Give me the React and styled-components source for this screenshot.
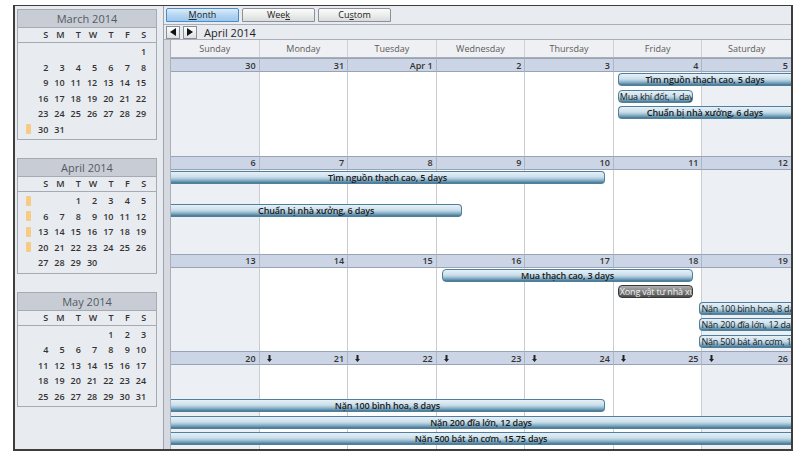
import React from 'react';
import styled, { createGlobalStyle } from 'styled-components';

const GlobalStyle = createGlobalStyle`
  body {
    margin: 0;
    background: #fff;
    font-family: "Open Sans", "Noto Sans", sans-serif;
  }
`;

const Frame = styled.div`
  margin: 5px 0 0 13px;
  width: 780px;
  height: 446px;
  box-sizing: border-box;
  border: 2px solid #3d3d3d;
  border-top-width: 1px;
  display: flex;
  background: #e8ebf0;
`;

const Sidebar = styled.div`
  width: 149px;
  box-sizing: border-box;
  padding: 3px 0 0 2px;
  display: flex;
  flex-direction: column;
  gap: 18px;
  border-right: 1px solid #9ea4ad;
`;

const MonthBox = styled.div`
  width: 140px;
  box-sizing: border-box;
  border: 1px solid #a6abb3;
`;

const MonthTitle = styled.div`
  height: 17px;
  line-height: 17px;
  background: #c8cdd5;
  border-bottom: 1px solid #a6abb3;
  text-align: center;
  font-size: 11px;
  color: #545a64;
`;

const MiniGrid = styled.div`
  display: grid;
  grid-template-columns: 16px repeat(7, 16.3px);
  grid-auto-rows: ${(p) => (p.$head ? '14px' : '15.5px')};
  padding: ${(p) => (p.$head ? '0' : '1px 0 2px')};
  border-bottom: ${(p) => (p.$head ? '1px solid #a6abb3' : 'none')};
`;

const MiniCell = styled.div`
  grid-column: ${(p) => p.$col};
  text-align: right;
  padding-right: 2px;
  font-size: 9px;
  font-weight: 600;
  line-height: ${(p) => (p.$head ? '14px' : '15.5px')};
  color: #333;
`;

const Marker = styled.div`
  grid-column: 1;
  align-self: center;
  width: 5px;
  height: 10px;
  margin-left: 8px;
  border-radius: 1px;
  background: #f8cb85;
`;

const Main = styled.div`
  flex: 1;
  min-width: 0;
  display: flex;
  flex-direction: column;
`;

const Toolbar = styled.div`
  height: 18px;
  border-bottom: 1px solid #a9afb8;
  display: flex;
  align-items: center;
  gap: 3px;
  padding-left: 2px;
`;

const ViewButton = styled.div`
  width: 73px;
  height: 14px;
  box-sizing: border-box;
  border: 1px solid ${(p) => (p.$active ? '#4d8cc4' : '#8d9197')};
  border-radius: 2px 2px 0 0;
  background: ${(p) =>
    p.$active
      ? 'linear-gradient(#dcecfa, #b5d6f2 50%, #9cc7ec)'
      : 'linear-gradient(#fbfbfb, #eceded 50%, #dadbdc)'};
  font-size: 9px;
  line-height: 12px;
  text-align: center;
  color: #222;
`;

const NavRow = styled.div`
  height: 14px;
  border-bottom: 1px solid #a9afb8;
  display: flex;
  align-items: center;
  gap: 3px;
  padding-left: 2px;
`;

const ArrowButton = styled.div`
  width: 14px;
  height: 13px;
  box-sizing: border-box;
  border: 1px solid #8a8f96;
  background: linear-gradient(#fdfdfd, #dde0e4);
  display: flex;
  align-items: center;
  justify-content: center;
`;

const Title = styled.div`
  margin-left: 4px;
  font-size: 11px;
  color: #222;
`;

const Body = styled.div`
  flex: 1;
  min-height: 0;
  display: flex;
`;

const Strip = styled.div`
  width: 7px;
  box-sizing: border-box;
  background: #d6dae0;
  border-right: 1px solid #aab0b9;
`;

const Calendar = styled.div`
  flex: 1;
  min-width: 0;
  display: flex;
  flex-direction: column;
`;

const HeaderRow = styled.div`
  height: 17px;
  display: grid;
  grid-template-columns: repeat(7, minmax(0, 1fr));
  border-bottom: 1px solid #a9afb8;
  background: #eef0f3;
`;

const HeaderCell = styled.div`
  font-size: 9px;
  line-height: 17px;
  text-align: center;
  color: #5a5a5a;
  border-right: ${(p) => (p.$last ? 'none' : '1px solid #cdd1d6')};
`;

const Week = styled.div`
  flex: 1;
  min-height: 0;
  display: grid;
  grid-template-columns: repeat(7, minmax(0, 1fr));
  grid-template-rows: 14px repeat(5, 16.5px) 1fr;
  overflow: hidden;
`;

const DayBg = styled.div`
  grid-column: ${(p) => p.$col};
  grid-row: 1 / -1;
  background: ${(p) => (p.$shade ? '#eceff4' : '#fff')};
  border-right: ${(p) => (p.$last ? 'none' : '1px solid #c9cdd2')};
`;

const DateCell = styled.div`
  grid-column: ${(p) => p.$col};
  grid-row: 1;
  z-index: 1;
  box-sizing: border-box;
  display: flex;
  align-items: center;
  justify-content: space-between;
  padding: 0 3px 0 7px;
  background: #ccd5e6;
  border-top: 1px solid #98a3b6;
  border-bottom: 1px solid #98a3b6;
  border-right: ${(p) => (p.$last ? 'none' : '1px solid #aeb6c4')};
  font-size: 9px;
  font-weight: 600;
  color: #333;
`;

const EventBar = styled.div`
  grid-column: ${(p) => p.$col} / span ${(p) => p.$span};
  grid-row: ${(p) => p.$slot + 2};
  align-self: start;
  z-index: 2;
  height: 13px;
  margin: 1px ${(p) => p.$mr}px 0 ${(p) => p.$ml}px;
  box-sizing: border-box;
  border: 1px solid ${(p) => (p.$dark ? '#383838' : '#4f7f9c')};
  border-left-width: ${(p) => (p.$openLeft ? 0 : 1)}px;
  border-right-width: ${(p) => (p.$openRight ? 0 : 1)}px;
  border-radius: ${(p) => (p.$openLeft ? 0 : 4)}px ${(p) => (p.$openRight ? 0 : 4)}px
    ${(p) => (p.$openRight ? 0 : 4)}px ${(p) => (p.$openLeft ? 0 : 4)}px;
  background: ${(p) =>
    p.$dark
      ? 'linear-gradient(#b0b0b0, #7a7a7a 55%, #4c4c4c)'
      : 'linear-gradient(#e6f0f7 0%, #cbdfeb 45%, #a9c8da 62%, #6d9ab5 85%, #44768f 100%)'};
  padding: 0 2px 0 ${(p) => (p.$align === 'left' ? 1 : 2)}px;
  font-size: 9px;
  font-weight: ${(p) => (p.$align === 'left' ? 400 : 600)};
  letter-spacing: ${(p) => (p.$align === 'left' ? '-0.2px' : '-0.15px')};
  line-height: 11px;
  color: ${(p) => (p.$dark ? '#f4f4f4' : '#1a1a1a')};
  text-align: ${(p) => p.$align};
  white-space: nowrap;
  overflow: hidden;
  min-width: 0;
`;

const DownArrow = () => (
  <svg width="5" height="7" viewBox="0 0 5 7">
    <path d="M1.5 0h2v4h1.5L2.5 7 0 4h1.5z" fill="#222" />
  </svg>
);

const months = [
  { name: 'March 2014', first: 6, days: 31, marks: [5] },
  { name: 'April 2014', first: 2, days: 30, marks: [0, 1, 2, 3] },
  { name: 'May 2014', first: 4, days: 31, marks: [] },
];

const dayLetters = ['S', 'M', 'T', 'W', 'T', 'F', 'S'];
const dayNames = ['Sunday', 'Monday', 'Tuesday', 'Wednesday', 'Thursday', 'Friday', 'Saturday'];

const weeks = [
  {
    dates: ['30', '31', 'Apr 1', '2', '3', '4', '5'],
    events: [
      { text: 'Tìm nguồn thạch cao, 5 days', col: 6, span: 2, slot: 0, ml: 4, openRight: true },
      { text: 'Mua khí đốt, 1 day', col: 6, span: 1, slot: 1, ml: 4, mr: 9, align: 'left' },
      { text: 'Chuẩn bị nhà xưởng, 6 days', col: 6, span: 2, slot: 2, ml: 4, openRight: true },
    ],
  },
  {
    dates: ['6', '7', '8', '9', '10', '11', '12'],
    events: [
      { text: 'Tìm nguồn thạch cao, 5 days', col: 1, span: 5, slot: 0, mr: 9, openLeft: true },
      { text: 'Chuẩn bị nhà xưởng, 6 days', col: 1, span: 4, slot: 2, mr: 63, openLeft: true },
    ],
  },
  {
    dates: ['13', '14', '15', '16', '17', '18', '19'],
    events: [
      { text: 'Mua thạch cao, 3 days', col: 4, span: 3, slot: 0, ml: 5, mr: 9 },
      { text: 'Xong vật tư nhà xưởng', col: 6, span: 1, slot: 1, ml: 4, mr: 9, dark: true, align: 'left' },
      { text: 'Nặn 100 bình hoa, 8 days', col: 7, span: 1, slot: 2, ml: -3, openRight: true, align: 'left' },
      { text: 'Nặn 200 đĩa lớn, 12 days', col: 7, span: 1, slot: 3, ml: -3, openRight: true, align: 'left' },
      { text: 'Nặn 500 bát ăn cơm, 15.75 days', col: 7, span: 1, slot: 4, ml: -3, openRight: true, align: 'left' },
    ],
  },
  {
    dates: ['20', '21', '22', '23', '24', '25', '26'],
    arrows: true,
    events: [
      { text: 'Nặn 100 bình hoa, 8 days', col: 1, span: 5, slot: 2, mr: 9, openLeft: true },
      { text: 'Nặn 200 đĩa lớn, 12 days', col: 1, span: 7, slot: 3, openLeft: true, openRight: true },
      { text: 'Nặn 500 bát ăn cơm, 15.75 days', col: 1, span: 7, slot: 4, openLeft: true, openRight: true },
    ],
  },
];

function MiniMonth({ month }) {
  const cells = [];
  const rows = Math.ceil((month.first + month.days) / 7);
  for (let r = 0; r < rows; r++) {
    if (month.marks.includes(r)) {
      cells.push(<Marker key={`m${r}`} style={{ gridRow: r + 1 }} />);
    }
    for (let c = 0; c < 7; c++) {
      const d = r * 7 + c - month.first + 1;
      if (d < 1 || d > month.days) continue;
      cells.push(
        <MiniCell key={d} $col={c + 2} style={{ gridRow: r + 1 }}>
          {d}
        </MiniCell>
      );
    }
  }
  return (
    <MonthBox>
      <MonthTitle>{month.name}</MonthTitle>
      <MiniGrid $head>
        {dayLetters.map((l, i) => (
          <MiniCell key={i} $col={i + 2} $head>
            {l}
          </MiniCell>
        ))}
      </MiniGrid>
      <MiniGrid>{cells}</MiniGrid>
    </MonthBox>
  );
}

export default function App() {
  return (
    <>
      <GlobalStyle />
      <Frame>
        <Sidebar>
          {months.map((m) => (
            <MiniMonth key={m.name} month={m} />
          ))}
        </Sidebar>
        <Main>
          <Toolbar>
            <ViewButton $active>
              <u>M</u>onth
            </ViewButton>
            <ViewButton>
              Wee<u>k</u>
            </ViewButton>
            <ViewButton>
              Cu<u>s</u>tom
            </ViewButton>
          </Toolbar>
          <NavRow>
            <ArrowButton>
              <svg width="6" height="8" viewBox="0 0 6 8">
                <path d="M6 0v8L0 4z" fill="#111" />
              </svg>
            </ArrowButton>
            <ArrowButton>
              <svg width="6" height="8" viewBox="0 0 6 8">
                <path d="M0 0v8l6-4z" fill="#111" />
              </svg>
            </ArrowButton>
            <Title>April 2014</Title>
          </NavRow>
          <Body>
            <Strip />
            <Calendar>
              <HeaderRow>
                {dayNames.map((n, i) => (
                  <HeaderCell key={n} $last={i === 6}>
                    {n}
                  </HeaderCell>
                ))}
              </HeaderRow>
              {weeks.map((w, wi) => (
                <Week key={wi}>
                  {w.dates.map((d, i) => (
                    <DayBg key={`bg${i}`} $col={i + 1} $shade={i === 0 || i === 6} $last={i === 6} />
                  ))}
                  {w.dates.map((d, i) => (
                    <DateCell key={`d${i}`} $col={i + 1} $last={i === 6}>
                      <span>{w.arrows && i > 0 ? <DownArrow /> : null}</span>
                      <span>{d}</span>
                    </DateCell>
                  ))}
                  {w.events.map((e, ei) => (
                    <EventBar
                      key={ei}
                      $col={e.col}
                      $span={e.span}
                      $slot={e.slot}
                      $ml={e.ml || 0}
                      $mr={e.mr || 0}
                      $openLeft={e.openLeft}
                      $openRight={e.openRight}
                      $dark={e.dark}
                      $align={e.align || 'center'}
                    >
                      {e.text}
                    </EventBar>
                  ))}
                </Week>
              ))}
            </Calendar>
          </Body>
        </Main>
      </Frame>
    </>
  );
}
